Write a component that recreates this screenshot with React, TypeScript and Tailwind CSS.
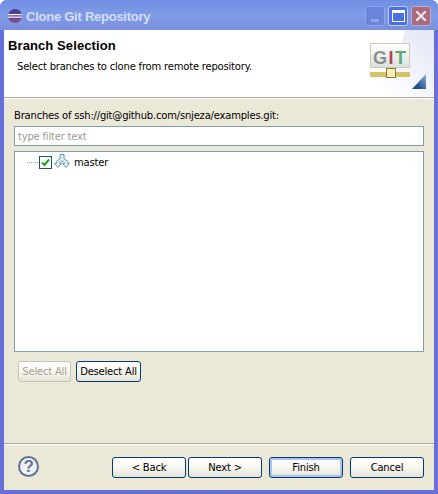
import { X } from "lucide-react";

const ui = "font-['DejaVu_Sans',sans-serif] text-[10px] leading-[13px] tracking-[-0.200px] text-black";

function WinButton({ children, focused, disabled, className }: { children: string; focused?: boolean; disabled?: boolean; className: string }) {
  return (
    <button
      type="button"
      className={`h-[21px] rounded-[3px] border bg-gradient-to-b from-white via-[#f7f6f0] to-[#e6e3d6] ${disabled ? "border-[#c7c5b4] text-[#a3a192]" : "border-[#003c74] text-black"} ${focused ? "shadow-[inset_0_0_0_2px_#a9c4ee]" : ""} ${className}`}
    >
      {children}
    </button>
  );
}

function CaptionButton({ tone, children }: { tone: string; children: React.ReactNode }) {
  return <div className={`grid size-[20px] place-items-center rounded-[3px] border ${tone}`}>{children}</div>;
}

function EclipseIcon() {
  return (
    <svg width="16" height="16" viewBox="0 0 16 16">
      <defs>
        <linearGradient id="ecl" x1="0" y1="0" x2="0" y2="1">
          <stop offset="0" stopColor="#3d3a8c" />
          <stop offset="1" stopColor="#8c4f8f" />
        </linearGradient>
      </defs>
      <circle cx="8" cy="8" r="7" fill="url(#ecl)" />
      <path d="M1 6.600h14M1 9.200h14" stroke="#f3f3fb" strokeWidth="1.200" />
    </svg>
  );
}

function BranchIcon() {
  return (
    <svg width="16" height="16" viewBox="0 0 16 16" fill="#e4f0f4" stroke="#5f9ab0" strokeWidth="1" strokeLinejoin="round">
      <path d="M6 .5h4v4.200l3.500 2.600v2h2l-3.500 4.200-3.500-4.200h2V8.600L8 6.800 5.500 8.600v.7h2L4 13.500.5 9.300h2v-2L6 4.700z" />
    </svg>
  );
}

function GitLogo() {
  return (
    <div className="relative h-full w-[75px]">
      {/* pale swoosh behind the logo */}
      <svg className="absolute inset-0" width="75" height="67" viewBox="0 0 75 67">
        <defs>
          <linearGradient id="swoosh" x1="0" y1="1" x2="1" y2="0">
            <stop offset="0.200" stopColor="#ffffff" />
            <stop offset="1" stopColor="#e2e6f5" />
          </linearGradient>
          <linearGradient id="tri" x1="0" y1="1" x2="1" y2="0">
            <stop offset="0.300" stopColor="#24508f" />
            <stop offset="1" stopColor="#8fb4dc" />
          </linearGradient>
        </defs>
        <path d="M46 0C40 30 20 55 0 67H75V0z" fill="url(#swoosh)" />
        <path d="M53 59 67 44V59z" fill="url(#tri)" />
      </svg>
      <div className="absolute left-[11px] top-[13px] h-[25px] w-[40px] border border-[#d8c8a0] bg-gradient-to-b from-white to-[#d8e2e4] pl-[2px] pt-[5px] font-['Liberation_Sans',sans-serif] text-[18px] font-bold leading-[18px] tracking-[1.500px]">
        <span className="text-[#8b8d8f]">G</span>
        <span className="text-[#b9444c]">I</span>
        <span className="text-[#5fa86e]">T</span>
      </div>
      <div className="absolute left-[11px] top-[42px] h-[5px] w-[40px] bg-[#d5c368]" />
      <div className="absolute left-[27px] top-[38px] size-[10px] border border-[#8a7a3a] bg-[#f8eeb8]" />
    </div>
  );
}

export default function App() {
  return (
    <div className={`flex h-[494px] w-[438px] flex-col overflow-hidden rounded-t-[7px] bg-[#6670d8] ${ui}`}>
      <div className="flex h-[30px] shrink-0 items-center justify-between bg-gradient-to-b from-[#6f8fe4] via-[#7f9be6] to-[#7a8fdf] pl-[7px] pr-[7px] pt-[2px]">
        <div className="flex items-center gap-[3px]">
          <EclipseIcon />
          <span className="font-['Liberation_Sans',sans-serif] text-[13px] font-bold tracking-[-0.250px] text-[#d5ddf6]">Clone Git Repository</span>
        </div>
        <div className="flex gap-[3px]">
          <CaptionButton tone="border-[#8ca3e8] bg-[#6a84dc]">
            <div className="mt-[8px] h-[3px] w-[8px] bg-[#8fa6e6]" />
          </CaptionButton>
          <CaptionButton tone="border-[#c3cdf0] bg-[#4a6fe0]">
            <div className="h-[12px] w-[13px] border border-t-[3px] border-white" />
          </CaptionButton>
          <CaptionButton tone="border-[#c3a8c0] bg-[#a96a80]">
            <X size={16} strokeWidth={3.500} className="text-[#f2e6ea]" />
          </CaptionButton>
        </div>
      </div>

      <div className="mx-[4px] mb-[4px] flex min-h-0 flex-1 flex-col bg-[#ebe8d8]">
        <div className="flex h-[68px] shrink-0 justify-between border-b border-[#aca899] bg-white">
          <div className="pl-[4px]">
            <h1 className="mt-[8px] font-['Liberation_Sans',sans-serif] text-[13px] font-bold leading-[15px] tracking-[0.100px]">Branch Selection</h1>
            <p className="mt-[7px] pl-[9px]">Select branches to clone from remote repository.</p>
          </div>
          <GitLogo />
        </div>
        <div className="h-px shrink-0 bg-white" />

        <div className="flex flex-1 flex-col px-[10px]">
          <div className="mt-[10px]">Branches of ssh://git@github.com/snjeza/examples.git:</div>
          <div className="mt-[4px] flex h-[20px] items-center border border-[#7f9db9] bg-white pl-[3px] text-[#9d9b8f]">type filter text</div>
          <div className="mt-[5px] h-[201px] border border-[#7f9db9] bg-white pl-[12px] pt-[2px]">
            <div className="flex items-center">
              <div className="mr-px w-[11px] border-t border-dotted border-[#9a9a9a]" />
              <div className="grid size-[13px] place-items-center border border-[#1c5180] bg-white">
                <svg width="9" height="9" viewBox="0 0 9 9">
                  <path d="M1 4.500 3.500 7 8 1.500" fill="none" stroke="#21a121" strokeWidth="2" />
                </svg>
              </div>
              <div className="ml-[2px]">
                <BranchIcon />
              </div>
              <span className="ml-[4px]">master</span>
            </div>
          </div>
          <div className="mt-[9px] flex gap-[5px] pl-[4px]">
            <WinButton disabled className="w-[53px]">Select All</WinButton>
            <WinButton className="w-[65px]">Deselect All</WinButton>
          </div>
        </div>

        <div className="h-px shrink-0 bg-[#aca899]" />
        <div className="h-px shrink-0 bg-white" />
        <div className="flex h-[45px] shrink-0 items-start px-[10px] pt-[12px]">
          <div className="ml-[4px] -mt-px grid size-[21px] place-items-center rounded-full border-2 border-[#5f7394] bg-[#eef0f4] font-['Liberation_Sans',sans-serif] text-[17px] font-bold text-[#5f7394]">?</div>
          <div className="ml-auto flex">
            <WinButton className="w-[74px]">{"< Back"}</WinButton>
            <WinButton className="ml-[2px] w-[74px]">{"Next >"}</WinButton>
            <WinButton focused className="ml-[7px] w-[74px]">Finish</WinButton>
            <WinButton className="ml-[7px] w-[74px]">Cancel</WinButton>
          </div>
        </div>
      </div>
    </div>
  );
}
